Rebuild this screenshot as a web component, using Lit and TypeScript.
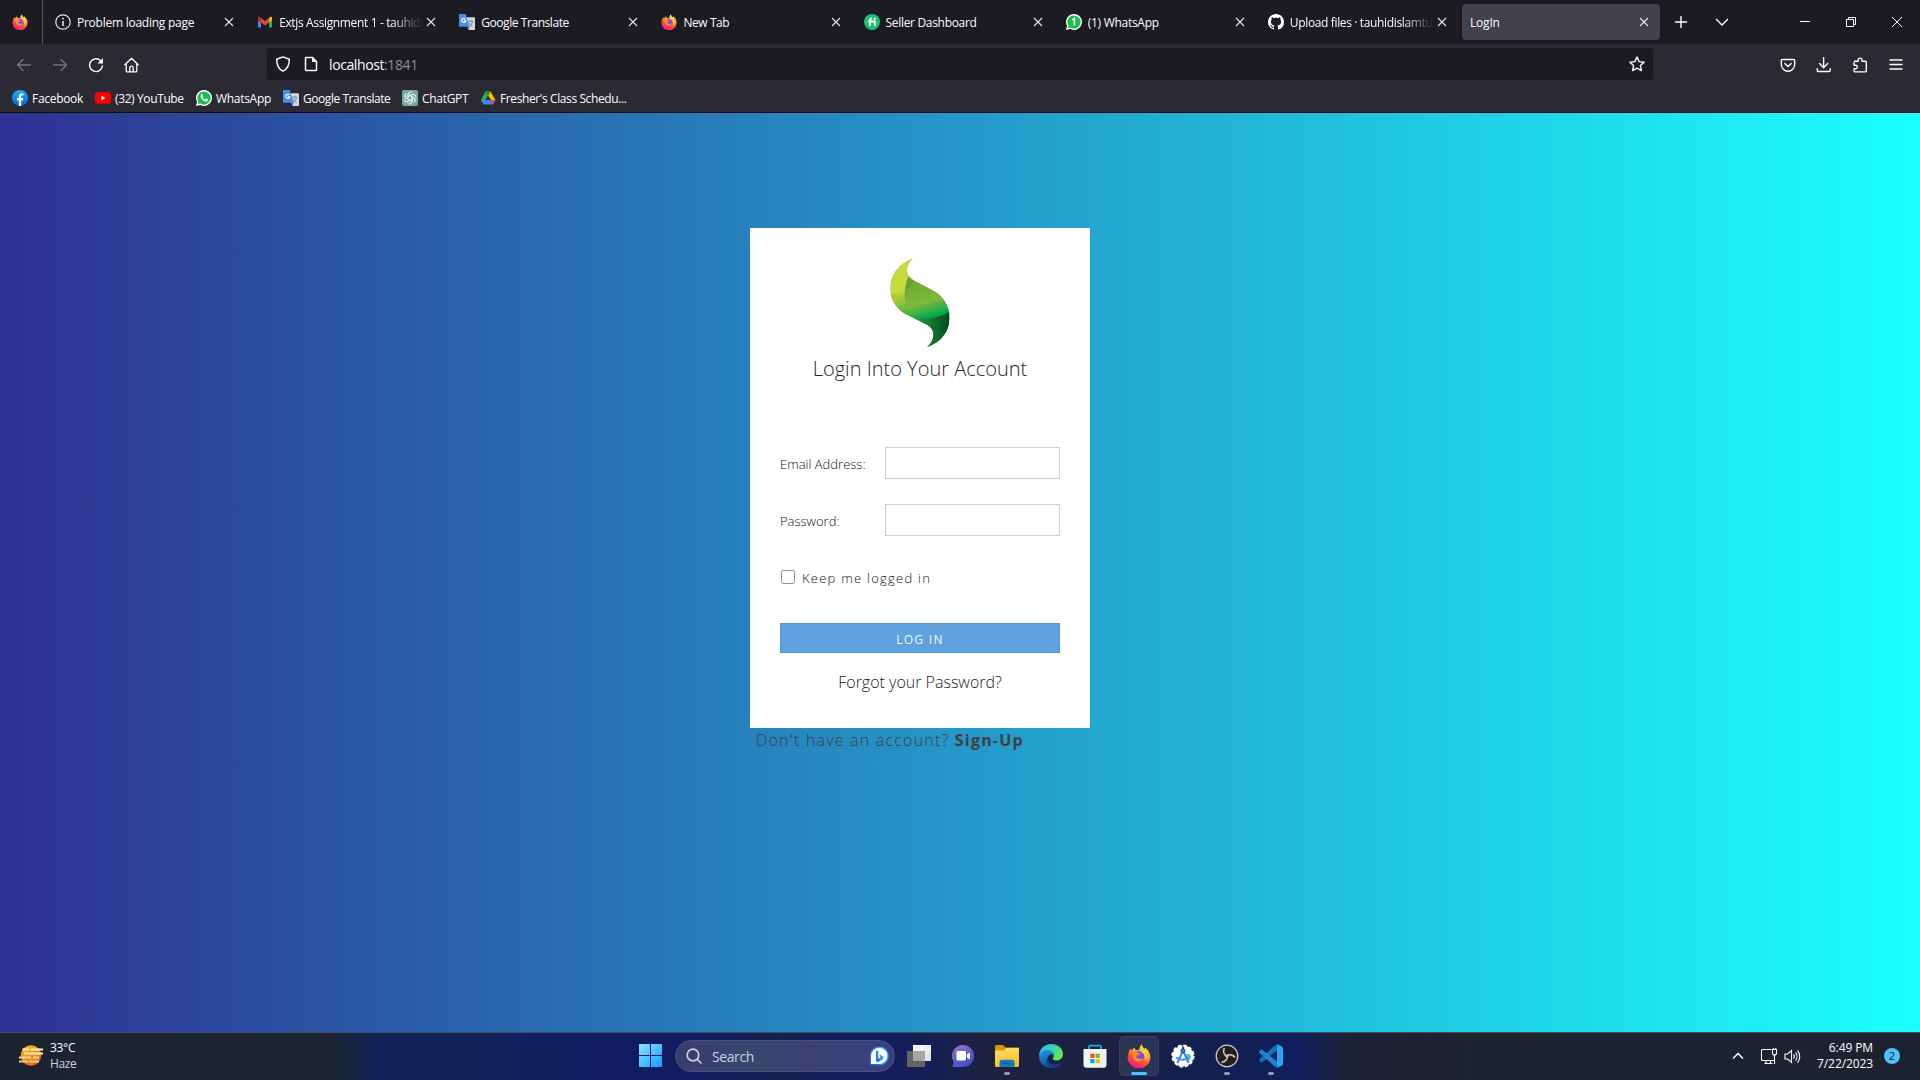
import { LitElement, html, css, svg, nothing, TemplateResult } from "lit";
import { customElement, state } from "lit/decorators.js";
import { classMap } from "lit/directives/class-map.js";
import { styleMap } from "lit/directives/style-map.js";

const box = (size: number, view: string, body: unknown) =>
  html`<svg class="ic" width=${size} height=${size} viewBox=${view}>${body}</svg>`;

const line = (d: string, w = 1.3, size = 16) =>
  box(size, "0 0 16 16", svg`<path d=${d} fill="none" stroke="currentColor" stroke-width=${w} stroke-linecap="round" stroke-linejoin="round"/>`);

const firefox = (size = 16) => box(size, "0 0 24 24", svg`
  <defs>
    <linearGradient id="fxa" x1="0.8" y1="0" x2="0.3" y2="1"><stop offset="0" stop-color="#fff044"/><stop offset=".35" stop-color="#ffb02e"/><stop offset=".62" stop-color="#ff5634"/><stop offset="1" stop-color="#f0148c"/></linearGradient>
    <radialGradient id="fxb" cx=".5" cy=".3" r=".8"><stop offset="0" stop-color="#a04ee8"/><stop offset="1" stop-color="#5a3fd0"/></radialGradient>
  </defs>
  <path fill="url(#fxa)" d="M14.8.3c.2 2.200 1.600 3.400 3 4.800.3-.5.3-1 .2-1.600 3.300 2.300 5.300 6 5.300 9.600A11.300 11.300 0 0 1 .7 13.300c0-3.700 1.300-6.700 3.300-8.900.1.900.3 1.500.8 2 .7-1.300 1.700-2.400 2.900-3 0 1 .3 2 1 2.700 1.300-.2 2.500-.1 3.400.3.300-2.300 1-4.600 2.700-6.100z"/>
  <circle cx="12" cy="12.300" r="5.300" fill="url(#fxb)"/>
  <path fill="#ff8a2a" d="M4.800 8.300c2-1.200 4.200-.8 5.400.2 1.100 0 2.300.3 2.500 1-.2 1.200-2.700 1.200-3.200 2.300-.5 1.300.4 2.800 2.300 3 2 .2 3-.8 4.500-.2-1 2.300-3.200 3.200-5.300 3-4-.3-6.500-4.500-6.200-9.300z"/>
  <path fill="#ffcf3a" d="M15 1.500c.3 3.200 4.300 4.700 4.700 9.600.2 2.700-.8 4.600-1.500 5.600.4-3-.5-6.400-3-8-2-1.300-1.900-4.900-.2-7.200z"/>`);

const gmail = () => box(16, "0 0 16 16", svg`
  <path fill="#4285f4" d="M1 5v8.500h3V7z"/><path fill="#34a853" d="M15 5v8.500h-3V7z"/>
  <path fill="#fbbc04" d="M12 4l1.300-1C14 2.500 15 3 15 4v2.200l-3 2.200z"/><path fill="#c5221f" d="M1 4c0-1 1-1.500 1.700-1L4 4v4.400L1 6.200z"/>
  <path fill="#ea4335" d="M4 4l4 3 4-3v4.400l-4 3-4-3z"/>`);

const translate = () => box(16, "0 0 16 16", svg`
  <path fill="#d4d7da" d="M6.500 3.200H15c.6 0 1 .4 1 1V15c0 .6-.4 1-1 1H9.500z"/>
  <path fill="none" stroke="#6f8ba0" stroke-width="1" d="M8.700 7.200h5.800M11.600 6v1.200M9.700 12.800c2-1.200 3.300-3 3.700-5.500M10 8.500c.7 2 2 3.500 3.600 4.300"/>
  <path fill="#4c8bf5" d="M1 0h5.700l3.800 12.800H1c-.6 0-1-.4-1-1V1c0-.6.400-1 1-1z"/><path fill="#3367d6" d="M7.500 12.800h3L9.300 16z"/>
  <path fill="none" stroke="#fff" stroke-width="1.200" d="M6.400 5.200A2 2 0 1 0 6.800 6.800H4.900"/>`);

const whatsapp = (one = false) => box(16, "0 0 16 16", svg`
  <path fill="#fff" d="M8 0a8 8 0 1 1-3.700 15.100L0 16l1-4.100A8 8 0 0 1 8 0z"/>
  <path fill="#16bf48" d="M8 1.400a6.600 6.600 0 1 1-3.500 12.200l-2.600.6.700-2.500A6.600 6.600 0 0 1 8 1.400z"/>
  ${one
    ? svg`<path d="M6.200 6L8.400 4.600V11.500" fill="none" stroke="#fff" stroke-width="1.700"/>`
    : svg`<path fill="#fff" d="M5.500 4.200c.6-.3.900 0 1.100.5l.5 1.200c.1.500-.5.800-.6 1.200.6 1.200 1.400 1.900 2.600 2.400.5-.1.800-1 1.200-.9l1.400.7c.5.300.2 1.300-.3 1.700-1.600 1.200-4.100-.2-5.500-1.700C4.600 7.900 3.900 5.300 5.500 4.200z"/>`}`);

const fiverr = () => box(16, "0 0 16 16", svg`
  <circle cx="8" cy="8" r="8" fill="#1dbf73"/>
  <path fill="none" stroke="#fff" stroke-width="1.800" d="M6 12V6.300c0-1.300.6-1.900 1.900-1.900M4.200 7.500h6.600V12"/><circle cx="10.700" cy="4.900" r="1.100" fill="#fff"/>`);

const github = () => box(16, "0 0 16 16", svg`
  <path fill="#fff" d="M8 0C3.580 0 0 3.580 0 8c0 3.540 2.290 6.530 5.470 7.590.4.070.55-.17.55-.38 0-.19-.01-.82-.01-1.490-2.010.37-2.530-.49-2.690-.94-.09-.23-.48-.94-.82-1.130-.28-.15-.68-.52-.01-.53.63-.01 1.080.58 1.230.82.720 1.210 1.870.87 2.330.66.070-.52.280-.87.510-1.070-1.780-.2-3.640-.89-3.640-3.950 0-.87.310-1.590.820-2.150-.08-.2-.36-1.020.080-2.120 0 0 .67-.21 2.200.820.640-.18 1.320-.27 2-.27s1.360.09 2 .27c1.530-1.040 2.200-.820 2.200-.820.440 1.100.160 1.920.080 2.120.510.560.820 1.270.820 2.150 0 3.070-1.870 3.750-3.650 3.950.290.250.540.730.540 1.480 0 1.070-.01 1.930-.01 2.200 0 .21.150.460.550.38A8 8 0 0 0 16 8c0-4.420-3.580-8-8-8z"/>`);

const info = () => box(16, "0 0 16 16", svg`
  <circle cx="8" cy="8" r="7.200" fill="none" stroke="#e4e4e8" stroke-width="1.200"/><path d="M8 7v5" stroke="#fff" stroke-width="1.400"/><circle cx="8" cy="4.600" r=".9" fill="#fff"/>`);

const facebook = () => box(16, "0 0 16 16", svg`
  <defs><linearGradient id="fb" x2="0" y2="1"><stop stop-color="#1aafff"/><stop offset="1" stop-color="#0163e0"/></linearGradient></defs>
  <circle cx="8" cy="8" r="8" fill="url(#fb)"/>
  <path fill="#fff" d="M6.800 16v-5.600H4.900V8h1.900V6.500C6.800 4.400 7.900 3.300 9.800 3.300l1.500.1v2h-1c-.9 0-1.200.5-1.200 1.200V8h2.100l-.4 2.400H9.100V16z"/>`);

const youtube = () => box(16, "0 0 16 16", svg`<rect y="2.300" width="16" height="11.400" rx="2.800" fill="#f00"/><path fill="#fff" d="M6.500 5.800v4.400L10.300 8z"/>`);

const chatgpt = () => box(16, "0 0 16 16", svg`
  <rect width="16" height="16" rx="2" fill="#75a99c"/>
  <g fill="none" stroke="#fff" stroke-width=".75">
    ${[0, 60, 120, 180, 240, 300].map((a) => svg`<path transform="rotate(${a} 8 8)" d="M6.100 8V4.300a2.400 2.400 0 0 1 4.300-1.400M6.100 6.600l3.400-1.900a2.300 2.300 0 0 1 3.100.8"/>`)}
  </g>`);

const drive = () => box(16, "0 0 16 16", svg`
  <path fill="#34a853" d="M5.300 1.500h2.800L10 4.700 3.800 14.500 1 10z"/><path fill="#fbbc04" d="M5.800 1.500h4.700L15.500 10h-4.700z"/>
  <path fill="#4285f4" d="M3.700 14.500L1 10h14.500l-2.600 4.500z"/><path fill="#188038" d="M5.300 1.500h5.200L8.100 5.400z"/>
  <path fill="#2c2b34" d="M8.100 5.600L10.700 10H5.400z"/><path fill="#ea4335" d="M10.800 10h4.700l-2.600 4.500z"/>`);

const sencha = () => html`<svg class="logo" width="60" height="90" viewBox="-.3 -.5 60.700 91">
  <defs>
    <clipPath id="leaf"><path d="M22.700 .3C9 5 0 16.500 0 30.500C0 42.500 7 52 18 57.500L38 67.500C45.500 72 46 82 37.300 89.500C51 85 60 74 60 60C60 48 53 37.500 43.500 32.700L22 21.300C15 16.500 15 7 22.700 .3Z"/></clipPath>
    <linearGradient id="sy" x1=".4" y1="0" x2=".6" y2="1"><stop offset="0" stop-color="#b2d235"/><stop offset=".35" stop-color="#9fca35"/><stop offset="1" stop-color="#3aa945"/></linearGradient>
    <linearGradient id="sm" gradientUnits="userSpaceOnUse" x1="26" y1="20" x2="38" y2="62"><stop offset="0" stop-color="#70a832"/><stop offset=".6" stop-color="#7cb93c"/><stop offset=".95" stop-color="#00a94f"/></linearGradient>
    <linearGradient id="sd"><stop offset="0" stop-color="#4f9d34"/><stop offset=".5" stop-color="#17762f"/><stop offset="1" stop-color="#004a1d"/></linearGradient>
  </defs>
  <g clip-path="url(#leaf)">
    <rect width="60" height="90" fill="url(#sm)"/>
    <path fill="url(#sy)" d="M0 34H18V60H0z"/>
    <path fill="url(#sm)" d="M19.500 15C13.500 29 13 43 18 60H60V15z"/>
    <path fill="#c6da3e" d="M0 0H24V17C17.500 20 15.500 27 14.700 33.500C10 36 5 36 0 35z"/>
    <path fill="#6a9e32" d="M18.500 18L24 22.200C21.800 26.500 18.500 30.500 15 33.200C15.300 27.500 16.500 22.500 18.500 18z"/>
    <path fill="url(#sd)" d="M22 60C35 62.500 49 60 60 53.500V90H22z"/>
  </g>
</svg>`;

const weather = () => box(24, "0 0 24 24", svg`
  <defs><linearGradient id="sun" x2=".5" y2="1"><stop stop-color="#ffc617"/><stop offset="1" stop-color="#ef6a0a"/></linearGradient></defs>
  <circle cx="12" cy="11.500" r="10.200" fill="url(#sun)"/>
  <g stroke="#fff0cc" stroke-width="2"><path d="M3.500 5.500h7M12 5.500h12"/><path d="M5 9.500h19"/><path d="M0 13.500h12M14 13.500h6" stroke="#f3d596"/><path d="M0 17.500h9M10 17.500h10" stroke="#e8c88c"/></g>`);

const start = () => box(24, "0 0 24 24", svg`
  <defs><linearGradient id="win" x1="0" y1="0" x2="24" y2="24" gradientUnits="userSpaceOnUse"><stop stop-color="#8be4ff"/><stop offset="1" stop-color="#0a9bff"/></linearGradient></defs>
  <path fill="url(#win)" d="M0 0h11v11H0zM12 0h11v11H12zM0 12h11v11H0zM12 12h11v11H12z"/>`);

const bing = () => box(20, "0 0 20 20", svg`
  <defs><linearGradient id="bg" x1="0" y1="1" x2="1" y2="0"><stop stop-color="#1462dc"/><stop offset="1" stop-color="#35c4f0"/></linearGradient></defs>
  <path d="M10.300 1.200a8.700 8.700 0 1 1 0 17.500H1.300V9.900a8.800 8.800 0 0 1 9-8.700z" fill="#fff" stroke="url(#bg)" stroke-width="1.400"/>
  <path fill="url(#bg)" d="M7 4.500l2.300.8v7.500l2.200-1.300-1.300-2.900 4.100 1.600v2.500L9 16.300l-2-1.400z"/>`);

const taskView = () => box(24, "0 0 24 24", svg`
  <defs><linearGradient id="tv" x2="1" y2="1"><stop stop-color="#fff"/><stop offset="1" stop-color="#dcdcdc"/></linearGradient></defs>
  <path fill="url(#tv)" d="M6 1h18v16H6z"/><path fill="#646464" d="M0 7h18v16H0z"/><path fill="#a5a5a5" d="M6 7h12v10H6z"/>`);

const chat = () => box(24, "0 0 24 24", svg`
  <defs><linearGradient id="ch" x2=".5" y2="1"><stop stop-color="#a479b6"/><stop offset=".5" stop-color="#6a62cc"/><stop offset="1" stop-color="#4a50c0"/></linearGradient></defs>
  <path fill="url(#ch)" d="M12 1a11 11 0 1 1 0 22H1.500l1.200-5A11 11 0 0 1 12 1z"/><rect x="5.500" y="7" width="9.500" height="9.500" rx="1.400" fill="#fff"/><path fill="#fff" d="M16 10.500l3-2v7l-3-2z"/>`);

const explorer = () => box(24, "0 0 24 24", svg`
  <defs><linearGradient id="ex" y2="1" x2=".3"><stop stop-color="#ffdd70"/><stop offset="1" stop-color="#f8be28"/></linearGradient></defs>
  <path fill="#d99a07" d="M0 2.500C0 1.700.6 1 1.500 1H8l2.500 2.500H24V8H0z"/><path fill="url(#ex)" d="M0 6.500h9L11 4h13v17.500c0 .9-.6 1.500-1.500 1.500h-21C.6 23 0 22.400 0 21.500z"/>
  <path fill="#1479bd" d="M4.500 23v-5c0-1.400.9-2.300 2.300-2.300h10.400c1.400 0 2.300.9 2.300 2.300v5z"/><path d="M8 19.500h8" stroke="#0a5a95" stroke-width="1.600"/>`);

const edge = () => box(24, "0 0 24 24", svg`
  <defs>
    <linearGradient id="ea" x1="0" y1="0" x2="1" y2=".5"><stop stop-color="#36c2f1"/><stop offset=".5" stop-color="#32cfc0"/><stop offset="1" stop-color="#66e44f"/></linearGradient>
    <linearGradient id="eb" x2=".4" y2="1"><stop stop-color="#1e9be2"/><stop offset="1" stop-color="#0c50a4"/></linearGradient>
  </defs>
  <path fill="url(#ea)" d="M0 11.500C.5 5 5.500 0 12.200 0 19 0 24 4.800 24 10.300c0 4-3 6.200-6.300 6.200-2.500 0-4-.8-4-1.800 0-.8 1-1.200 1-3C14.700 9 12 7 8.500 7 4.500 7 1.500 9 0 11.500z"/>
  <path fill="url(#eb)" d="M0 12c1-4 4.500-6 8-6 4 0 7 2.400 7 5.500-1-1.200-2.300-1.400-3.500-1-2.500 1-3.500 4-2.600 6.500 1.200 3.500 6.300 5.300 12.500 2.500.4-.1.700.1.500.5C19.500 22.800 16 24 12 24 5.200 24 0 19 0 12z"/>
  <path fill="#103f85" d="M9.500 12c-1.700 4.500 1.500 9.500 6.500 9 2.500 0 4.500-.8 5.800-1.400-2 2.700-5 4.300-8.800 4.400-5.800-1-7.300-8-3.500-12z"/>`);

const store = () => box(24, "0 0 24 24", svg`
  <path fill="none" stroke="#1ea7f0" stroke-width="1.800" d="M6 7V3c0-.8.4-1.300 1.200-1.300h9.600c.8 0 1.200.5 1.200 1.300v4"/>
  <path fill="#f0f2f4" d="M.5 5h23v16c0 1.600-1 2.700-2.700 2.700H3.200C1.500 23.700.5 22.600.5 21z"/>
  <path fill="#f25022" d="M7.300 9.700h4.200v4.200H7.300z"/><path fill="#7fba00" d="M12.500 9.700h4.200v4.200h-4.200z"/><path fill="#00a4ef" d="M7.300 15h4.200v4.200H7.300z"/><path fill="#ffb900" d="M12.500 15h4.200v4.200h-4.200z"/>`);

const studio = () => box(24, "0 0 24 24", svg`
  <circle cx="12" cy="12" r="10.600" fill="#fff"/><circle cx="12" cy="12" r="10.800" fill="none" stroke="#fff" stroke-width="1.600" stroke-dasharray="3.500 2.155"/>
  <path fill="#3ddc84" d="M14 11c3-2 5.500-1 6 2l-2 4-3-1z"/>
  <path fill="none" stroke="#4285f4" stroke-width="2.100" d="M11.500 7.500L6.500 19M12.500 7.500L17.500 19M5 13.500c4 2.800 9 2.800 13 0"/><circle cx="12" cy="6.800" r="2" fill="#4285f4" stroke="#17376b"/><path d="M12 2.500v2.500" stroke="#17376b" stroke-width="1.800"/>`);

const obs = () => box(24, "0 0 24 24", svg`
  <circle cx="12" cy="12" r="10.800" fill="#231f20" stroke="#c9c9cb" stroke-width="1.300"/>
  <g fill="none" stroke="#c9c9cb" stroke-width="1.700">${[0, 120, 240].map((a) => svg`<path transform="rotate(${a} 12 12)" d="M12.300 12.500C9 11 7.800 7.500 9.300 4.200"/>`)}</g>
  <circle cx="12" cy="12" r="1.600" fill="#c9c9cb"/>`);

const vscode = () => box(24, "0 0 24 24", svg`
  <path fill="#1173b8" d="M17.500 0L18 6.500 3.200 18.300c-.4.300-.8.300-1.200 0L.4 16.800c-.5-.4-.5-1 0-1.500z"/>
  <path fill="#1a86d0" d="M17.500 24L18 17.500 3.200 5.700c-.4-.3-.8-.3-1.200 0L.4 7.200c-.5.400-.5 1 0 1.500z"/>
  <path fill="#2ba5f5" d="M17.500 0L23 2.500c.6.300 1 .9 1 1.600v15.800c0 .7-.4 1.300-1 1.600L17.500 24c.5-.4.500-1 .5-1.800V1.800c0-.8 0-1.300-.5-1.800z"/>`);

interface Tab { title: string; icon?: () => TemplateResult; active?: boolean; clip?: boolean; track: number }
interface Mark { title: string; icon: () => TemplateResult; width: number; track: number }

@customElement("app-root")
export class AppRoot extends LitElement {
  @state() private tabs: Tab[] = [
    { title: "Problem loading page", icon: info, track: -0.25 },
    { title: "Extjs Assignment 1 - tauhidi", icon: gmail, clip: true, track: -0.36 },
    { title: "Google Translate", icon: translate, track: -0.44 },
    { title: "New Tab", icon: () => firefox(), track: -0.42 },
    { title: "Seller Dashboard", icon: fiverr, track: -0.32 },
    { title: "(1) WhatsApp", icon: () => whatsapp(true), track: -0.28 },
    { title: "Upload files · tauhidislamtuh", icon: github, clip: true, track: -0.36 },
    { title: "LogIn", active: true, track: -0.2 },
  ];

  private marks: Mark[] = [
    { title: "Facebook", icon: facebook, width: 83, track: -0.3 },
    { title: "(32) YouTube", icon: youtube, width: 101, track: -0.38 },
    { title: "WhatsApp", icon: () => whatsapp(), width: 87, track: -0.3 },
    { title: "Google Translate", icon: translate, width: 119, track: -0.45 },
    { title: "ChatGPT", icon: chatgpt, width: 78, track: -0.3 },
    { title: "Fresher's Class Schedu...", icon: drive, width: 150, track: -0.4 },
  ];

  static styles = css`
    :host { display: block; width: 1920px; height: 1080px; overflow: hidden; font-family: "Open Sans", "Noto Sans", sans-serif; }
    * { box-sizing: border-box; }
    .ic, .logo { display: block; flex: none; }
    .screen { display: flex; flex-direction: column; height: 1080px; }
    .tabbar { display: flex; height: 44px; background: #1c1b22; color: #fbfbfe; font-size: 12px; flex: none; }
    .pin { width: 43px; padding: 14px 0 0 12px; border-right: 1px solid #55545c; flex: none; }
    .tabs { display: flex; width: 1617.100px; gap: 4px; padding: 4px 0 0 4px; margin-right: 3px; flex: none; }
    .tab { display: flex; align-items: center; flex: 1 1 0; min-width: 0; height: 36px; padding: 0 8px; border-radius: 4px; gap: 6px; }
    .tab.active { background: #42414d; box-shadow: 0 0 3px rgba(0,0,0,.4); }
    .label { flex: 1; min-width: 0; overflow: hidden; white-space: nowrap; line-height: 18px; padding-top: 2px; }
    .clip .label { -webkit-mask-image: linear-gradient(to left, transparent, #000 32px); mask-image: linear-gradient(to left, transparent, #000 32px); margin-right: -6px; }
    .x { width: 16px; height: 16px; display: grid; place-items: center; }
    .cell { display: grid; place-items: center; flex: none; color: #fbfbfe; }
    .w36 { width: 36px; } .w46 { width: 46px; }
    .winbtns { display: flex; margin-left: auto; }
    .nav { display: flex; height: 40px; background: #2b2a33; align-items: flex-start; padding: 4px 6px 0; flex: none; }
    .nav .cell { height: 33px; }
    .dim { color: #75747c; }
    .url { display: flex; align-items: center; width: 1386px; height: 32px; margin: 0 0 0 117px; padding: 0 8px; background: #1c1b22; border-radius: 4px; color: #fbfbfe; font-size: 14px; flex: none; }
    .url .addr { margin-left: 10px; flex: 1; letter-spacing: -.4px; line-height: 20px; padding-top: 2px; }
    .addr span { color: #8f8f9a; }
    .page-ic { margin-left: 12px; }
    .tools { display: flex; margin-left: auto; }
    .marks { display: flex; height: 29px; flex: none; background: #2b2a33; border-bottom: 1px solid #0c0c0d; padding: 0 0 1px 12px; align-items: center; color: #fbfbfe; font-size: 12px; }
    .mark { display: flex; gap: 4px; align-items: center; white-space: nowrap; }
    .mark span { padding-top: 2px; line-height: 17px; }
    .page { flex: 1; min-height: 0; background: linear-gradient(90deg, #2e3192 0%, #1bffff 100%); padding: 115px 0 0 750px; color: #404040; }
    .card { width: 340px; height: 500px; background: #fff; padding: 30px; display: flex; flex-direction: column; align-items: center; }
    .title { margin: 7px 0 0; font-weight: 300; font-size: 20px; line-height: 27px; white-space: nowrap; color: #282828; }
    .field { display: flex; align-items: center; width: 280px; height: 32px; font-size: 13px; font-weight: 300; }
    .field.first { margin-top: 65px; } .field.second { margin-top: 25px; }
    .field label { width: 105px; padding-top: 1px; white-space: nowrap; color: #111; }
    .field input { width: 175px; height: 32px; border: 1px solid #cfcfcf; background: #fff; outline: none; padding: 0 8px; }
    .keep { display: flex; width: 280px; height: 20px; margin-top: 32px; align-items: center; gap: 7px; font-size: 13px; font-weight: 300; letter-spacing: 1.250px; color: #111; white-space: nowrap; }
    .keep i { width: 14px; height: 14px; margin: -2px 0 0 1px; border: 1px solid #8f8f9d; border-radius: 2px; background: #fff; }
    .login { width: 280px; height: 30px; margin-top: 35px; border: 1px solid #5396d0; background: #5fa2dd; color: #f2f7fc; font: 400 12px "Open Sans", sans-serif; letter-spacing: 1.300px; padding: 2px 0 0; flex: none; }
    .forgot { margin-top: 17px; font-size: 16px; line-height: 24px; font-weight: 300; white-space: nowrap; color: #222; }
    .signup { padding-left: 6px; font-size: 16px; line-height: 24px; font-weight: 300; letter-spacing: 1.200px; white-space: nowrap; }
    .signup b { font-weight: 700; letter-spacing: 1.200px; }
    .taskbar { display: flex; height: 48px; flex: none; border-top: 1px solid #4a4a58; padding-bottom: 1px; align-items: center; color: #fff; font-size: 12px;
      background: linear-gradient(90deg, #1c2330 0, #1a2531 330px, #10245a 380px, #11245a 480px, #101e60 540px, #121c60 700px, #14204f 780px, #111d60 860px, #151f54 930px, #1c2140 985px, #1b2140 1110px, #14204f 1180px, #101f5c 1300px, #1c2138 1345px, #1f2030 1400px, #1c232f 1480px, #1c2230 1920px); }
    .weather { display: flex; width: 631px; padding-left: 19px; gap: 7px; align-items: center; line-height: 16px; flex: none; }
    .weather .ic { margin-top: -1px; }
    .weather div { color: #cfd3d8; letter-spacing: -.35px; } .weather b { display: block; font-weight: 400; color: #fff; letter-spacing: -.3px; }
    .apps { display: flex; gap: 4px; align-items: center; }
    .app { position: relative; width: 40px; height: 40px; border-radius: 5px; display: grid; place-items: center; }
    .app.on { background: rgba(255,255,255,.09); border: 1px solid rgba(255,255,255,.06); }
    .dot { position: absolute; bottom: 1px; width: 6px; height: 3px; border-radius: 2px; background: #9a9cae; }
    .on .dot { width: 16px; background: #4cc2ff; bottom: 0; }
    .search { display: flex; align-items: center; width: 220px; height: 32px; border-radius: 16px; background: linear-gradient(90deg, #3a3c6e, #36476e 35%, #3b3f72 60%, #394080); border: 1px solid #4b5080; padding: 0 5px 0 10px; gap: 10px; color: #cdd1de; font-size: 14px; flex: none; }
    .search span { flex: 1; letter-spacing: -.4px; }
    .tray { display: flex; align-items: center; margin-left: auto; padding-right: 20px; }
    .clock { width: 72px; text-align: right; line-height: 16px; letter-spacing: -.1px; white-space: nowrap; }
    .badge { width: 16px; height: 16px; margin-left: 11px; border-radius: 50%; background: #4cc2ff; color: #10202c; font-size: 11px; line-height: 16px; text-align: center; }
    .mon { margin: 0 6px 0 16px; }
  `;

  private app(icon: TemplateResult, running = false, on = false) {
    return html`<div class=${classMap({ app: true, on })}>${icon}${running ? html`<span class="dot"></span>` : nothing}</div>`;
  }

  render() {
    return html`<div class="screen">
      <div class="tabbar">
        <div class="pin">${firefox()}</div>
        <div class="tabs">
          ${this.tabs.map((t) => html`<div class=${classMap({ tab: true, active: !!t.active, clip: !!t.clip })}>
            ${t.icon ? t.icon() : nothing}<span class="label" style=${styleMap({ letterSpacing: t.track + "px" })}>${t.title}</span>
            <span class="x">${box(10, "0 0 10 10", svg`<path d="M1 1l8 8M9 1L1 9" stroke="#e6e6ea" stroke-width="1.100"/>`)}</span>
          </div>`)}
        </div>
        <div class="cell w36">${line("M8 2.500v11M2.500 8h11", 1.4)}</div>
        <div class="cell w46">${line("M2.500 5.500L8 11l5.500-5.500", 1.4)}</div>
        <div class="winbtns">
          <div class="cell w46">${box(10, "0 0 10 10", svg`<path d="M0 4.500h10" stroke="#fff"/>`)}</div>
          <div class="cell w46">${box(10, "0 0 10 10", svg`<path d="M.5 2.500h7v7h-7zM2.500 2.500v-2h7v7h-2" fill="none" stroke="#fff"/>`)}</div>
          <div class="cell w46">${box(10, "0 0 10 10", svg`<path d="M0 0l10 10M10 0L0 10" stroke="#fff"/>`)}</div>
        </div>
      </div>
      <div class="nav">
        <div class="cell w36 dim">${line("M14.500 8h-13M7 2.500L1.500 8 7 13.500")}</div>
        <div class="cell w36 dim">${line("M1.500 8h13M9 2.500L14.500 8 9 13.500")}</div>
        <div class="cell w36">${box(16, "0 0 16 16", svg`<path d="M12.700 3.800A6.400 6.400 0 1 0 14.400 9" fill="none" stroke="currentColor" stroke-width="1.400" stroke-linecap="round"/><path d="M15 1v5.500H9.500z" fill="currentColor"/>`)}</div>
        <div class="cell w36">${line("M.8 7.800L7.500 1.200l6.700 6.600M2.200 6.700V14c0 .6.300.9.900.9h8.800c.6 0 .9-.3.900-.9V6.700M5.800 14.800v-4c0-1 .7-1.600 1.700-1.600s1.700.6 1.700 1.600v4")}</div>
        <div class="url">
          ${line("M8 .9L14.300 3.300C14.500 9 12.500 13 8 15.100 3.500 13 1.500 9 1.700 3.300z", 1.5)}
          <span class="page-ic">${box(16, "0 0 16 16", svg`<path d="M3.500 1.500h6l4 4v8.300c0 .4-.3.700-.7.700H3.200c-.4 0-.7-.3-.7-.7V2.200c0-.4.300-.7.700-.7z" fill="none" stroke="currentColor" stroke-width="1.500"/><path d="M9 1.500V6h4.500z" fill="currentColor"/>`)}</span>
          <div class="addr">localhost<span>:1841</span></div>
          ${line("M8 1l2.100 4.600 5 .6-3.700 3.400 1 5L8 12.100l-4.400 2.500 1-5L.9 6.200l5-.6z", 1.4)}
        </div>
        <div class="tools">
          <div class="cell w36">${line("M2.300 2.500h11.400c.6 0 1 .4 1 1v4.100a6.700 6.700 0 0 1-13.400 0V3.500c0-.6.400-1 1-1zM4.800 6.500L8 9.500l3.200-3", 1.4)}</div>
          <div class="cell w36">${line("M7.600 .6v10M3.600 6.600L7.600 10.800l4-4.200M1.200 11.600v1.700c0 .7.500 1.200 1.200 1.200h10.600c.7 0 1.200-.5 1.200-1.200v-1.700", 1.4)}</div>
          <div class="cell w36">${line("M2.600 4.300h3.600V3a1.900 1.900 0 0 1 3.800 0v1.300h3.500c.5 0 .8.3.8.8v9c0 .5-.3.800-.8.800H2.900c-.5 0-.8-.3-.8-.8v-2.400h1.500a1.700 1.700 0 0 0 0-3.400H2.100V5.100", 1.4)}</div>
          <div class="cell w36">${line("M2 3h12M2 7.500h12M2 12h12", 1.3)}</div>
        </div>
      </div>
      <div class="marks">
        ${this.marks.map((m) => html`<div class="mark" style=${styleMap({ width: m.width + "px", letterSpacing: m.track + "px" })}>${m.icon()}<span>${m.title}</span></div>`)}
      </div>

      <main class="page">
        <section class="card">
          ${sencha()}
          <h1 class="title">Login Into Your Account</h1>
          <div class="field first"><label>Email Address:</label><input type="text" /></div>
          <div class="field second"><label>Password:</label><input type="password" /></div>
          <div class="keep"><i></i><span>Keep me logged in</span></div>
          <button class="login">LOG IN</button>
          <div class="forgot">Forgot your Password?</div>
        </section>
        <div class="signup">Don't have an account? <b>Sign-Up</b></div>
      </main>

      <footer class="taskbar">
        <div class="weather">${weather()}<div><b>33°C</b>Haze</div></div>
        <div class="apps">
          ${this.app(start())}
          <div class="search">${line("M7 1.200a5.800 5.800 0 1 1 0 11.600A5.800 5.800 0 0 1 7 1.200M11.300 11.300L15 15", 1.7)}<span>Search</span>${bing()}</div>
          ${this.app(taskView())}${this.app(chat())}${this.app(explorer(), true)}${this.app(edge())}${this.app(store())}
          ${this.app(firefox(24), true, true)}${this.app(studio())}${this.app(obs(), true)}${this.app(vscode(), true)}
        </div>
        <div class="tray">
          ${box(12, "0 0 12 12", svg`<path d="M1 8.500l5-5 5 5" fill="none" stroke="#fff" stroke-width="1.500"/>`)}
          <span class="mon">${box(18, "0 0 18 18", svg`<path d="M11.500 2.500h-9c-.6 0-1 .4-1 1v9c0 .6.400 1 1 1h12M6 13.500v3M10.500 13.500v3M4.500 16.500h8M12.500 2.500h4v3.500a2 2 0 0 1-4 0zM14.500 8v9M13.300 1v1.500M15.700 1v1.500" fill="none" stroke="#fff" stroke-width="1.100"/>`)}</span>
          ${box(17, "0 0 17 17", svg`<path d="M1 6h2.700L7.500 2.500v12L3.700 11H1zM9.500 6.300c1 1.300 1 3.100 0 4.400M11.500 4.300c2 2.400 2 6 0 8.400M13.500 2.300c3 3.500 3 8.900 0 12.400" fill="none" stroke="#fff" stroke-width="1.100"/>`)}
          <div class="clock">6:49 PM<br />7/22/2023</div>
          <div class="badge">2</div>
        </div>
      </footer>
    </div>`;
  }
}
